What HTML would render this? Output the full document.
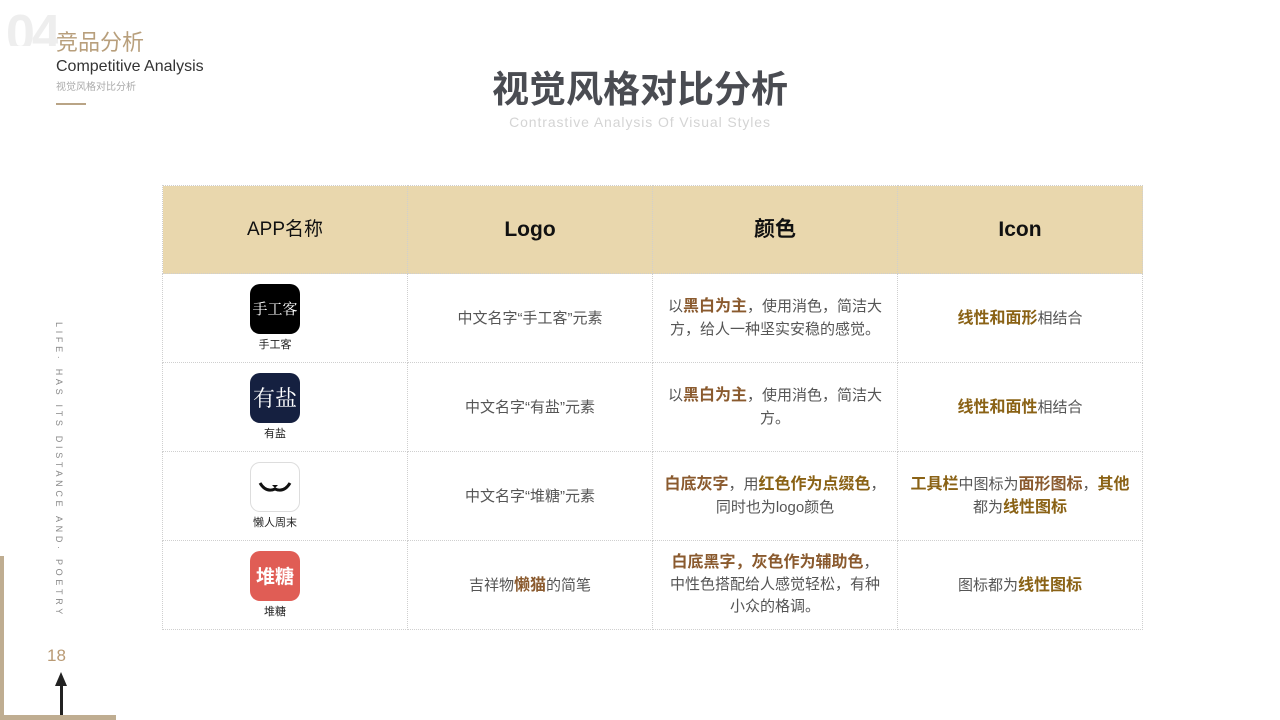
<!DOCTYPE html>
<html><head><meta charset="utf-8"><style>
body{margin:0;width:1280px;height:720px;background:#fff;position:relative;overflow:hidden;font-family:"Liberation Sans","Noto Sans CJK SC",sans-serif;}
.a{position:absolute}
table{position:absolute;left:162px;top:185px;border-collapse:collapse;table-layout:fixed}
td{border:1px dotted #cfcfcf;text-align:center;vertical-align:middle;padding:0 4px;color:#555;font-size:15px;line-height:23px;height:88px;white-space:nowrap}
tr.h td{background:#e9d7ad;color:#111;font-size:21px;font-weight:bold;height:87px}
b{color:#8a5a2e;font-weight:bold;font-size:16px}
b.g{color:#8a6215}
.w{position:relative;left:-10px}
.ic{width:50px;height:50px;border-radius:10px;margin:0 auto;display:flex;align-items:center;justify-content:center;color:#fff;font-family:"Noto Serif CJK SC",serif;font-size:15px}
.lb{font-size:11px;color:#222;line-height:16px;margin-top:3px}
</style></head><body>
<div class="a" style="left:6px;top:12px;font-size:52px;font-weight:bold;color:#eeeeee;line-height:44px;letter-spacing:-3px;height:34px;overflow:hidden">04</div>
<div class="a" style="left:56px;top:30px;font-size:22px;color:#b89f7c;line-height:26px">竞品分析</div>
<div class="a" style="left:56px;top:58px;font-size:16px;color:#333;line-height:18px">Competitive Analysis</div>
<div class="a" style="left:56px;top:81px;font-size:10px;color:#aaa;line-height:14px">视觉风格对比分析</div>
<div class="a" style="left:56px;top:103px;width:30px;height:2px;background:#b9a486"></div>
<div class="a" style="left:0;top:70px;width:1280px;text-align:center;font-size:37px;font-weight:bold;color:#4a4c52;line-height:40px">视觉风格对比分析</div>
<div class="a" style="left:0;top:114px;width:1280px;text-align:center;font-size:14px;color:#d4d4d4;line-height:16px;letter-spacing:0.9px">Contrastive Analysis Of Visual Styles</div>
<div class="a" style="left:52px;top:322px;width:14px;font-size:9px;color:#888;writing-mode:vertical-rl;letter-spacing:3.7px;line-height:14px">LIFE· HAS ITS DISTANCE AND· POETRY</div>
<div class="a" style="left:0;top:556px;width:4px;height:164px;background:#bfad91"></div>
<div class="a" style="left:0;top:715px;width:116px;height:5px;background:#bfad91"></div>
<div class="a" style="left:47px;top:646px;font-size:17px;color:#b99a74;line-height:20px">18</div>
<div class="a" style="left:60px;top:684px;width:3px;height:31px;background:#222"></div>
<div class="a" style="left:55px;top:672px;width:0;height:0;border-left:6px solid transparent;border-right:6px solid transparent;border-bottom:14px solid #222"></div>
<table>
<colgroup><col style="width:245px"><col style="width:245px"><col style="width:245px"><col style="width:245px"></colgroup>
<tr class="h"><td style="font-weight:normal;font-size:19px">APP名称</td><td>Logo</td><td>颜色</td><td>Icon</td></tr>
<tr><td><div class="w"><div class="ic" style="background:#000">手工客</div><div class="lb">手工客</div></div></td><td>中文名字“手工客”元素</td><td>以<b>黑白为主</b>，使用消色，简洁大<br>方，给人一种坚实安稳的感觉。</td><td><b class="g">线性和面形</b>相结合</td></tr>
<tr><td><div class="w"><div class="ic" style="background:#152040;font-size:22px">有盐</div><div class="lb">有盐</div></div></td><td>中文名字“有盐”元素</td><td>以<b>黑白为主</b>，使用消色，简洁大<br>方。</td><td><b class="g">线性和面性</b>相结合</td></tr>
<tr><td><div class="w"><div class="ic" style="background:#fff;border:1px solid #ddd;box-sizing:border-box"><svg width="34" height="16" viewBox="0 0 34 16"><path d="M2 4 Q8 14 17 10 Q26 14 32 4" fill="none" stroke="#111" stroke-width="3"/><path d="M14 6h6l-3 3z" fill="#111"/></svg></div><div class="lb">懒人周末</div></div></td><td>中文名字“堆糖”元素</td><td><b>白底灰字</b>，用<b class="g">红色作为点缀色</b>，<br>同时也为logo颜色</td><td><b class="g">工具栏</b>中图标为<b>面形图标</b>，<b class="g">其他</b><br>都为<b class="g">线性图标</b></td></tr>
<tr><td><div class="w"><div class="ic" style="background:#e05d55;font-family:'Noto Sans CJK SC',sans-serif;font-size:19px;font-weight:bold">堆糖</div><div class="lb">堆糖</div></div></td><td>吉祥物<b>懒猫</b>的简笔</td><td style="line-height:22px"><b>白底黑字，灰色作为辅助色</b>，<br>中性色搭配给人感觉轻松，有种<br>小众的格调。</td><td>图标都为<b class="g">线性图标</b></td></tr>
</table>
</body></html>
